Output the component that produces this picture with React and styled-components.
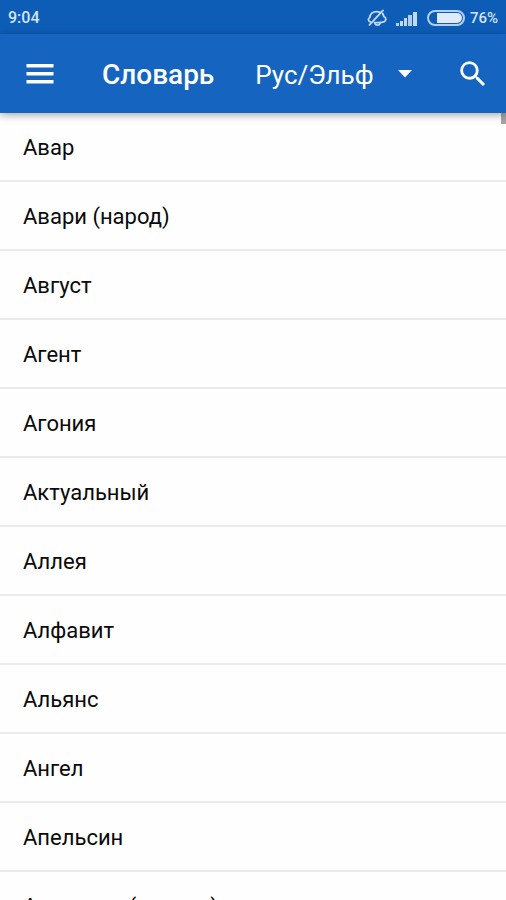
import React, { useState } from "react";
import styled, { createGlobalStyle } from "styled-components";

const words = [
  "Авар",
  "Авари (народ)",
  "Август",
  "Агент",
  "Агония",
  "Актуальный",
  "Аллея",
  "Алфавит",
  "Альянс",
  "Ангел",
  "Апельсин",
  "Апельсин (дерево)",
];

const MutedBellIcon = () => (
  <svg width="20" height="18" viewBox="0 0 20 18" fill="none">
    <g stroke="#c3d9f6" strokeWidth="1.8" strokeLinecap="round" strokeLinejoin="round">
      <path d="M3.200 12.800 C1 12 .8 9.500 2.800 8.500 C3.200 4.600 6 2.600 9.800 2.600 C11 2.600 12 2.900 13 3.400" />
      <path d="M15.500 4.500 C16.500 5.500 16.600 6.500 16.800 7.500 C19.500 8.500 19.500 12 17 12.800 C15.500 13.600 11 13.800 7.500 13.600" />
      <path d="M8 14.500 C8.500 16.600 12.500 16.600 13 14.500" />
      <path d="M2.500 15.800 L16 1.400" />
    </g>
  </svg>
);

const SignalIcon = () => (
  <svg width="22" height="16" viewBox="0 0 22 16" fill="#c3d9f6">
    <rect x="0" y="13" width="3" height="3" opacity="0.9" />
    <rect x="4" y="11" width="3" height="5" />
    <rect x="8" y="8" width="3" height="8" />
    <rect x="12" y="5" width="4" height="11" opacity="0.9" />
    <rect x="17" y="2" width="4" height="14" />
  </svg>
);

const BatteryIcon = () => (
  <svg width="38" height="16" viewBox="0 0 38 16" fill="none">
    <rect x="1" y="1" width="36" height="14" rx="7" stroke="#b4cff3" strokeWidth="2" />
    <path d="M10 3 H30 A5 5 0 0 1 30 13 H10 Z" fill="#dfebfb" />
  </svg>
);

const App = () => {
  const [direction, setDirection] = useState("rus");

  return (
    <StPage>
      <GlobalStyle />
      <StStatusBar>
        <span>9:04</span>
        <StStatusIcons>
          <MutedBellIcon />
          <SignalIcon />
          <StBattery>
            <BatteryIcon />
            <span>76%</span>
          </StBattery>
        </StStatusIcons>
      </StStatusBar>
      <StToolbar>
        <StIconButton type="button" aria-label="Меню">
          <svg width="28" height="20" viewBox="0 0 28 20" fill="#fff">
            <path d="M0.500 0 H27.500 V3.500 H0.500Z M0.500 8 H27.500 V11.500 H0.500Z M0.500 16 H27.500 V19.500 H0.500Z" />
          </svg>
        </StIconButton>
        <StTitle>Словарь</StTitle>
        <StSelectBox>
          <StSelect
            aria-label="Направление перевода"
            value={direction}
            onChange={(e) => {
              setDirection(e.target.value);
            }}
          >
            <option value="rus">Рус/Эльф</option>
            <option value="elf">Эльф/Рус</option>
          </StSelect>
          <StArrow width="14" height="8" viewBox="0 0 14 8" fill="#fff">
            <path d="M0 0 H14 L7 7.500Z" />
          </StArrow>
        </StSelectBox>
        <StSearchButton type="button" aria-label="Поиск">
          <svg width="34" height="34" viewBox="0 0 24 24" fill="#fff">
            <path d="M15.500 14h-.79l-.28-.27A6.471 6.471 0 0 0 16 9.500 6.500 6.500 0 1 0 9.500 16c1.610 0 3.090-.59 4.230-1.570l.27.28v.79l5 4.990L20.490 19l-4.990-5zm-6 0C7.010 14 5 11.990 5 9.500S7.010 5 9.500 5 14 7.010 14 9.500 11.990 14 9.500 14z" />
          </svg>
        </StSearchButton>
      </StToolbar>
      <StContent>
        <StList>
          {words.map((word) => (
            <StWord key={word}>{word}</StWord>
          ))}
        </StList>
        <StScrollThumb />
      </StContent>
    </StPage>
  );
};

export default App;

const GlobalStyle = createGlobalStyle`
  * {
    box-sizing: border-box;
  }

  body {
    margin: 0;
    background-color: #fefefe;
    font-family: Roboto, "Noto Sans", sans-serif;
  }
`;

const StPage = styled.div`
  display: flex;
  flex-direction: column;
  height: 100vh;
  overflow: hidden;
`;

const StStatusBar = styled.div`
  display: flex;
  flex-shrink: 0;
  align-items: center;
  justify-content: space-between;
  height: 34px;
  padding: 2px 8px 0;
  background-color: #0d5cb6;
  color: #d3e4fa;
  font-size: 16px;
  font-weight: 500;
  line-height: 20px;
`;

const StStatusIcons = styled.div`
  display: flex;
  align-items: center;
  gap: 9px;
`;

const StBattery = styled.div`
  display: flex;
  align-items: center;
  gap: 5px;
  font-size: 15px;
`;

const StToolbar = styled.header`
  display: flex;
  flex-shrink: 0;
  align-items: center;
  height: 79px;
  padding: 0 16px;
  background-color: #1565c0;
  color: #fff;
  box-shadow: 0 2px 8px rgba(0, 0, 0, 0.35);
  z-index: 1;
`;

const StIconButton = styled.button`
  display: flex;
  align-items: center;
  justify-content: center;
  width: 48px;
  height: 48px;
  padding: 0;
  border: none;
  background: none;
  cursor: pointer;
`;

const StSearchButton = styled(StIconButton)`
  width: 34px;
  margin-left: auto;
`;

const StTitle = styled.h1`
  margin: 0 0 0 38px;
  padding-top: 3px;
  font-size: 28px;
  font-weight: 500;
  line-height: 36px;
`;

const StSelectBox = styled.div`
  display: flex;
  position: relative;
  align-items: center;
  margin-left: 41px;
`;

const StSelect = styled.select`
  appearance: none;
  width: 160px;
  height: 40px;
  padding: 2px 0 0;
  border: none;
  outline: none;
  background: none;
  color: #fff;
  font-family: inherit;
  font-size: 26px;
  cursor: pointer;

  option {
    color: #000;
  }
`;

const StArrow = styled.svg`
  position: absolute;
  right: 3px;
  pointer-events: none;
`;

const StContent = styled.main`
  position: relative;
  flex: 1;
  min-height: 0;
`;

const StList = styled.ul`
  height: 100%;
  margin: 0;
  padding: 0;
  overflow-y: auto;
  list-style: none;
  scrollbar-width: none;
`;

const StWord = styled.li`
  display: flex;
  align-items: center;
  height: 69px;
  padding: 2px 23px 0;
  border-bottom: 2px solid #ebebeb;
  color: #0a0a0a;
  font-size: 22px;
  line-height: 28px;
`;

const StScrollThumb = styled.div`
  position: absolute;
  top: 0;
  right: 0;
  width: 5px;
  height: 11px;
  background-color: #a3a3a3;
`;
